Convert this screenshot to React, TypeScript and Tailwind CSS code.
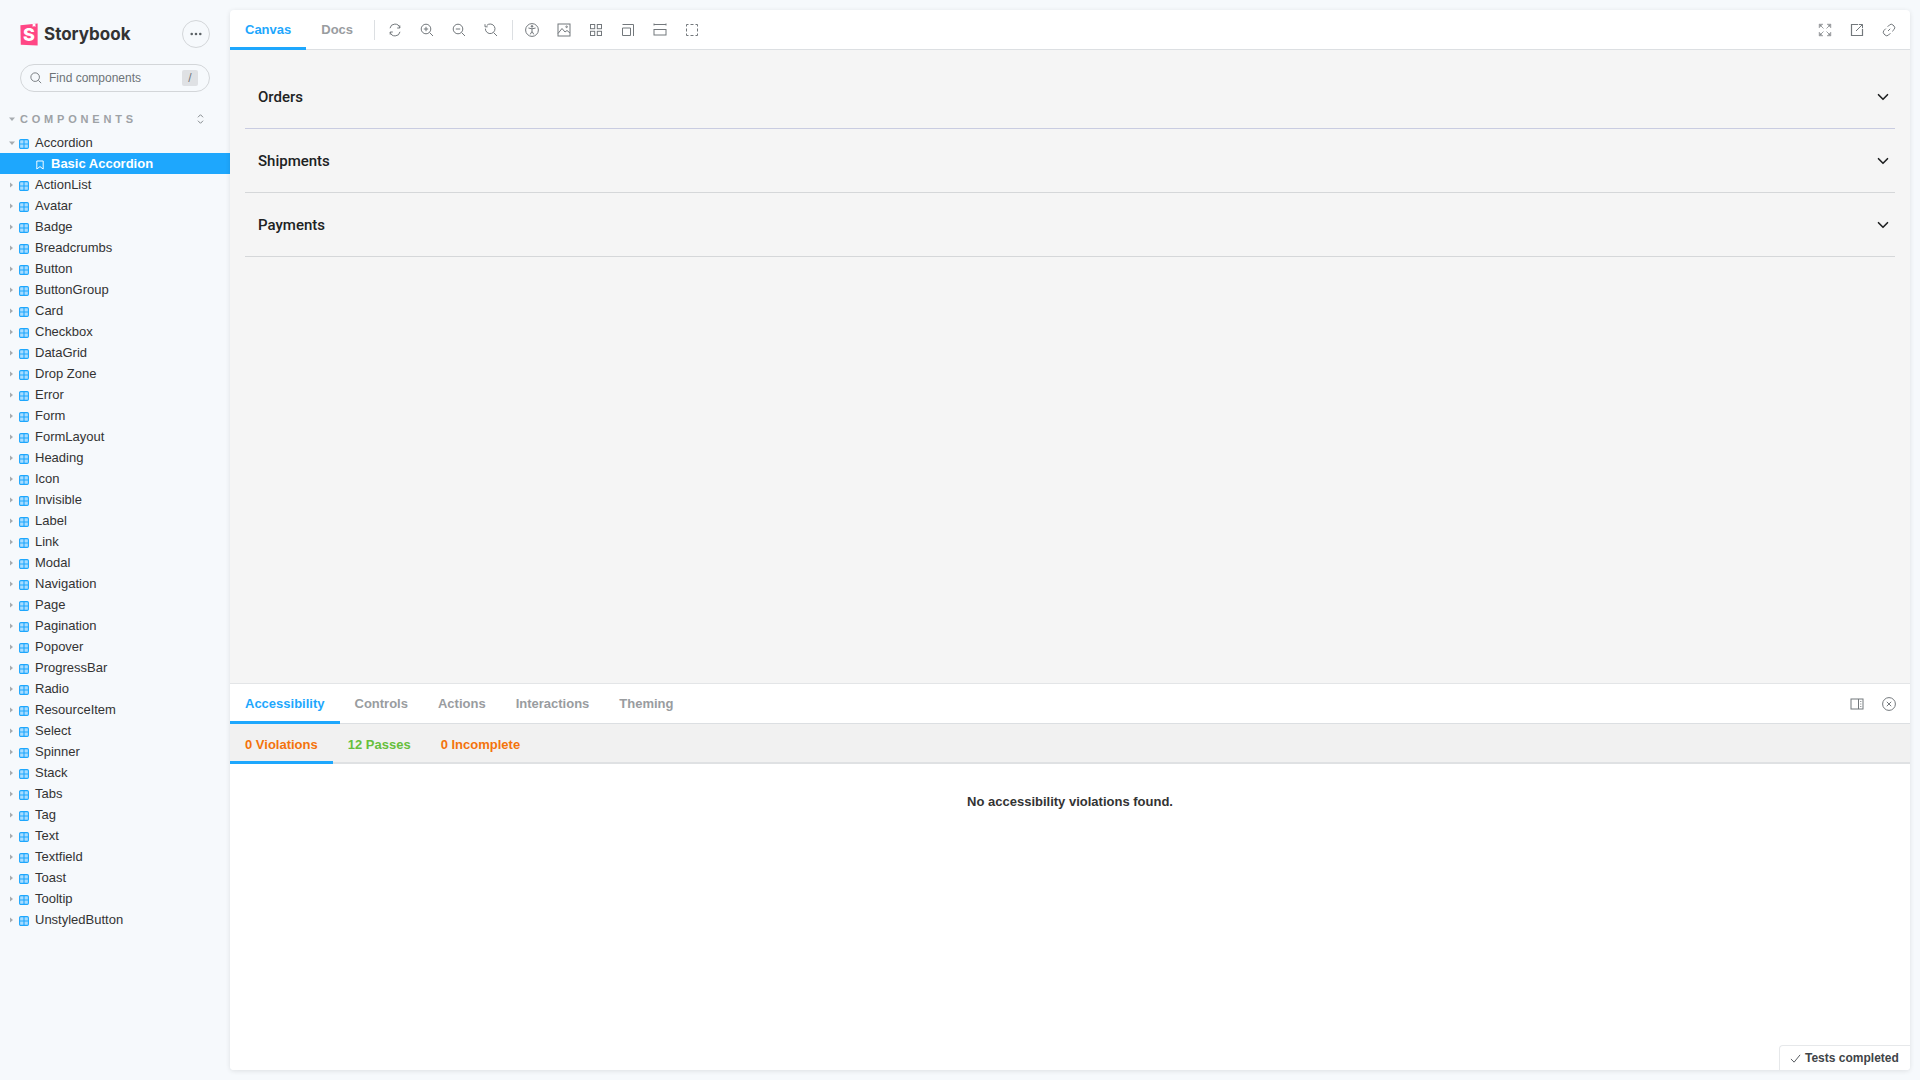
import type { ReactNode } from "react";
import { ChevronDown } from "lucide-react";

const components = [
  "ActionList", "Avatar", "Badge", "Breadcrumbs", "Button", "ButtonGroup", "Card", "Checkbox", "DataGrid",
  "Drop Zone", "Error", "Form", "FormLayout", "Heading", "Icon", "Invisible", "Label", "Link", "Modal",
  "Navigation", "Page", "Pagination", "Popover", "ProgressBar", "Radio", "ResourceItem", "Select", "Spinner",
  "Stack", "Tabs", "Tag", "Text", "Textfield", "Toast", "Tooltip", "UnstyledButton",
];

const Glyph = ({ children, className = "" }: { children: ReactNode; className?: string }) => (
  <svg
    viewBox="0 0 14 14"
    fill="none"
    stroke="currentColor"
    strokeWidth="1"
    className={"h-[14px] w-[14px] shrink-0 " + className}
  >
    {children}
  </svg>
);

const ToolIcon = ({ children }: { children: ReactNode }) => (
  <span className="flex h-[32px] w-[32px] items-center justify-center text-[#73787c]">
    <Glyph>{children}</Glyph>
  </span>
);

const Arrow = ({ open = false }: { open?: boolean }) => (
  <svg viewBox="0 0 6 6" className="h-[6px] w-[6px] shrink-0 fill-[#a7acb0]">
    {open ? <path d="M0 1.5h6L3 5z" /> : <path d="M1 .4v5.2L4 3z" />}
  </svg>
);

const ComponentIcon = () => (
  <svg viewBox="0 0 10 10" className="mt-[2px] h-[10px] w-[10px] shrink-0 text-[#1ea7fd]" fill="none" stroke="currentColor" strokeWidth="1.1">
    <rect x="0.6" y="0.6" width="8.8" height="8.8" rx="1.2" fill="#a8dcff" />
    <path d="M5 0.6v8.8M0.6 5h8.8" />
  </svg>
);

const TreeRow = ({ label, open = false }: { label: string; open?: boolean }) => (
  <div className="flex h-[21px] items-center pl-[9px] text-[13px] leading-[21px] text-[#333333]">
    <Arrow open={open} />
    <span className="ml-[4px]">
      <ComponentIcon />
    </span>
    <span className="ml-[6px]">{label}</span>
  </div>
);

const Sidebar = () => (
  <aside className="w-[230px] shrink-0">
    <div className="flex h-[64px] items-center justify-between px-[20px] pt-[4px]">
      <div className="flex items-center gap-[6px]">
        <svg viewBox="0 0 18 23" className="h-[23px] w-[18px]">
          <path d="M0.4 2.2 17.6 0.4V22.6L0.8 21.8Z" fill="#ff4785" />
          <path d="M12.6 0.9 15.4 0.6 15.5 3.9 14 2.9 12.7 4Z" fill="#fff" />
          <text x="9" y="18" textAnchor="middle" fontSize="18" fontWeight="800" fill="#fff" fontFamily="Inter, sans-serif">S</text>
        </svg>
        <span className="font-['Inter',sans-serif] text-[17px] font-bold leading-[22px] text-[#333333]">
          Storybook
        </span>
      </div>
      <div className="flex h-[28px] w-[28px] items-center justify-center rounded-full border border-[#d3d6d9] text-[#5c6266]">
        <svg viewBox="0 0 14 4" className="h-[4px] w-[12px] fill-current">
          <circle cx="2" cy="2" r="1.5" />
          <circle cx="7" cy="2" r="1.5" />
          <circle cx="12" cy="2" r="1.5" />
        </svg>
      </div>
    </div>
    <div className="ml-[20px] flex h-[28px] w-[190px] items-center rounded-full border border-[#d3d6d9] pl-[9px] pr-[11px]">
      <svg viewBox="0 0 14 14" className="h-[12px] w-[12px] shrink-0 text-[#73787c]" fill="none" stroke="currentColor" strokeWidth="1.1">
        <circle cx="6" cy="6" r="5" />
        <path d="M9.8 9.8 13 13" />
      </svg>
      <span className="ml-[7px] flex-1 text-[12px] text-[#6d7377]">Find components</span>
      <span className="flex h-[16px] w-[16px] items-center justify-center rounded-[2px] bg-[#dfe1e4] text-[12px] text-[#73787c]">
        /
      </span>
    </div>
    <div className="mt-[18px] flex h-[18px] items-center pl-[9px] pr-[25px]">
      <Arrow open />
      <span className="ml-[5px] flex-1 text-[11px] font-bold tracking-[3.8px] text-[#9ea2a6]">COMPONENTS</span>
      <svg viewBox="0 0 10 14" className="h-[12px] w-[9px] text-[#73787c]" fill="none" stroke="currentColor" strokeWidth="1">
        <path d="M2 5 5 2l3 3M2 9l3 3 3-3" />
      </svg>
    </div>
    <div className="mt-[4px]">
      <TreeRow label="Accordion" open />
      <div className="flex h-[21px] items-center bg-[#1ea7fd] pl-[36px] text-[13px] font-bold leading-[21px] text-white">
        <svg viewBox="0 0 10 12" className="mt-[2px] h-[10px] w-[8px]" fill="none" stroke="currentColor" strokeWidth="1.2">
          <path d="M1 1h8v10L5 8 1 11z" />
        </svg>
        <span className="ml-[7px]">Basic Accordion</span>
      </div>
      {components.map((name) => (
        <TreeRow key={name} label={name} />
      ))}
    </div>
  </aside>
);

const AccordionRow = ({ title, className = "" }: { title: string; className?: string }) => (
  <div className={"flex items-center justify-between border-b pl-[13px] pr-[3px] pt-[2px] font-['Roboto',sans-serif] " + className}>
    <span className="text-[15px] font-medium text-[#202223]">{title}</span>
    <ChevronDown className="mt-[-2px] h-[18px] w-[18px] text-[#202223]" strokeWidth={2.2} />
  </div>
);

const PanelTab = ({ label, active = false }: { label: string; active?: boolean }) => (
  <div
    className={
      "flex h-[40px] items-center px-[15px] text-[13px] font-bold border-b-[3px] pt-[3px] " +
      (active ? "border-[#1ea7fd] text-[#1ea7fd]" : "border-transparent text-[#999c9f]")
    }
  >
    {label}
  </div>
);

const Toolbar = () => (
  <div className="flex h-[40px] shrink-0 items-center justify-between border-b border-[#dcdfe2] pr-[5px]">
    <div className="flex h-full items-center">
      <PanelTab label="Canvas" active />
      <PanelTab label="Docs" />
      <div className="ml-[6px] mr-[4px] h-[20px] w-px bg-[#dcdfe2]" />
      <ToolIcon>
        <path d="M2 5.2A5 5 0 0 1 11.8 5M12 8.8A5 5 0 0 1 2.2 9" />
        <path d="M11.8 2.4V5H9.2M2.2 11.6V9h2.6" />
      </ToolIcon>
      <ToolIcon>
        <circle cx="6" cy="6" r="4.8" />
        <path d="M9.6 9.6 13 13M6 3.8v4.4M3.8 6h4.4" />
      </ToolIcon>
      <ToolIcon>
        <circle cx="6" cy="6" r="4.8" />
        <path d="M9.6 9.6 13 13M3.8 6h4.4" />
      </ToolIcon>
      <ToolIcon>
        <path d="M2.8 2.4A4.8 4.8 0 1 1 1.4 5.6M9.6 9.6 13 13M1 1.2v2.6h2.6" />
      </ToolIcon>
      <div className="ml-[5px] mr-[3px] h-[20px] w-px bg-[#dcdfe2]" />
      <ToolIcon>
        <circle cx="7" cy="7" r="6.4" />
        <circle cx="7" cy="3.4" r="0.8" fill="currentColor" />
        <path d="M3.4 5 7 5.8 10.6 5M7 5.8v2.6M7 8.4 5.2 11.4M7 8.4l1.8 3" />
      </ToolIcon>
      <ToolIcon>
        <rect x="1" y="1" width="12" height="12" />
        <path d="M1 10.5 5 5.5l3 3.5 2-1.5 3 2.5" />
        <circle cx="9.6" cy="3.8" r="0.8" />
      </ToolIcon>
      <ToolIcon>
        <rect x="1.5" y="1.5" width="4.2" height="4.2" />
        <rect x="8.3" y="1.5" width="4.2" height="4.2" />
        <rect x="1.5" y="8.3" width="4.2" height="4.2" />
        <rect x="8.3" y="8.3" width="4.2" height="4.2" />
      </ToolIcon>
      <ToolIcon>
        <path d="M1.5 1.5h11V13M1.5 5h8v7.5h-8z" />
      </ToolIcon>
      <ToolIcon>
        <path d="M1 1.5h12M1 .5v2M13 .5v2" />
        <path d="M1 6.5h1.5M4 6.5h1.5M7.5 6.5h1.5M10.5 6.5H13" />
        <rect x="1" y="6.5" width="12" height="5.5" />
      </ToolIcon>
      <ToolIcon>
        <path d="M1.5 3.5v-2h2M5.5 1.5h3M10.5 1.5h2v2M12.5 5.5v3M12.5 10.5v2h-2M8.5 12.5h-3M3.5 12.5h-2v-2M1.5 8.5v-3" />
      </ToolIcon>
    </div>
    <div className="flex items-center">
      <ToolIcon>
        <path d="M1 1h4L1 5zM13 1H9l4 4zM13 13H9l4-4zM1 13h4l-4-4z" fill="currentColor" fillOpacity="0.6" strokeWidth="0.3" />
        <path d="M2 2l3.5 3.5M12 2 8.5 5.5M12 12 8.5 8.5M2 12l3.5-3.5" strokeOpacity="0.7" />
      </ToolIcon>
      <ToolIcon>
        <path d="M8 1.5H1.5v11h11V6" strokeWidth="1.2" />
        <path d="M6 8 12.5 1.5M8.8 1.5h3.7v3.7" />
      </ToolIcon>
      <ToolIcon>
        <path d="M6 8 8.2 5.8M5.6 3.8 7.4 2a2.6 2.6 0 0 1 3.6 0l1 1a2.6 2.6 0 0 1 0 3.6l-1.8 1.8" />
        <path d="M8.4 10.2 6.6 12a2.6 2.6 0 0 1-3.6 0l-1-1a2.6 2.6 0 0 1 0-3.6l1.8-1.8" />
      </ToolIcon>
    </div>
  </div>
);

const Addons = () => (
  <div className="relative flex flex-1 flex-col border-t border-[#e3e5e7] bg-white">
    <div className="flex h-[40px] items-center justify-between border-b border-[#dcdfe2] pr-[5px]">
      <div className="flex h-full">
        <PanelTab label="Accessibility" active />
        <PanelTab label="Controls" />
        <PanelTab label="Actions" />
        <PanelTab label="Interactions" />
        <PanelTab label="Theming" />
      </div>
      <div className="flex items-center">
        <ToolIcon>
          <rect x="1" y="2" width="12" height="10" />
          <path d="M8.5 2v10M10.8 4v1M10.8 6.5v1M10.8 9v1" />
        </ToolIcon>
        <ToolIcon>
          <circle cx="7" cy="7" r="6.4" />
          <path d="M4.8 4.8 9.2 9.2M9.2 4.8 4.8 9.2" />
        </ToolIcon>
      </div>
    </div>
    <div className="flex h-[40px] border-b-2 border-[#dfe1e3] bg-[#f1f1f1]">
      <div className="flex h-[40px] items-center border-b-[3px] border-[#1ea7fd] px-[15px] pt-[4px] text-[13px] font-bold text-[#f4730c]">
        0 Violations
      </div>
      <div className="flex h-[40px] items-center px-[15px] pt-[1px] text-[13px] font-bold text-[#66bf3c]">12 Passes</div>
      <div className="flex h-[40px] items-center px-[15px] pt-[1px] text-[13px] font-bold text-[#f4730c]">0 Incomplete</div>
    </div>
    <p className="mt-[28px] text-center text-[13px] font-bold leading-[20px] text-[#333333]">
      No accessibility violations found.
    </p>
    <div className="absolute bottom-0 right-0 flex h-[25px] w-[131px] items-center rounded-tl-[4px] border-l border-t border-[#e6e8ea] bg-white pl-[10px] text-[12px] font-bold text-[#3f4448]">
      <svg viewBox="0 0 12 12" className="mr-[4px] h-[11px] w-[11px] text-[#4a4f53]" fill="none" stroke="currentColor" strokeWidth="1">
        <path d="M1 6.5 4.5 10 11 2" />
      </svg>
      Tests completed
    </div>
  </div>
);

export default function App() {
  return (
    <div className="flex h-[1080px] w-[1920px] overflow-hidden bg-[#f6f9fc] font-['Liberation_Sans',sans-serif]">
      <Sidebar />
      <main className="mb-[10px] mr-[10px] mt-[10px] flex min-w-0 flex-1 flex-col overflow-hidden rounded-[4px] bg-white shadow-[0_1px_5px_0_rgba(0,0,0,0.1)]">
        <Toolbar />
        <div className="h-[633px] shrink-0 bg-[#f5f5f5] px-[15px] pt-[15px]">
          <AccordionRow title="Orders" className="h-[64px] border-[#c9cce1]" />
          <AccordionRow title="Shipments" className="h-[64px] border-[#d5d7d9]" />
          <AccordionRow title="Payments" className="h-[64px] border-[#d5d7d9]" />
        </div>
        <Addons />
      </main>
    </div>
  );
}
